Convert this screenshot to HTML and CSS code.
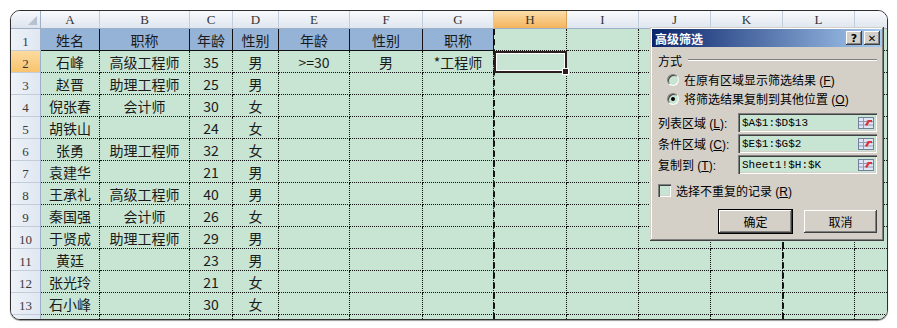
FILE: index.html
```html
<!DOCTYPE html>
<html>
<head>
<meta charset="utf-8">
<title>高级筛选</title>
<link rel="stylesheet" href="styles.css">
</head>
<body>
<div class="frame">
  <div class="sheet">
    <div class="corner"></div><div class="ch">A</div><div class="ch">B</div><div class="ch">C</div><div class="ch">D</div><div class="ch">E</div><div class="ch">F</div><div class="ch">G</div><div class="ch on">H</div><div class="ch">I</div><div class="ch">J</div><div class="ch">K</div><div class="ch">L</div><div class="ch"></div>

    <div class="rh">1</div><div class="hd">姓名</div><div class="hd">职称</div><div class="hd">年龄</div><div class="hd">性别</div><div class="hd">年龄</div><div class="hd">性别</div><div class="hd">职称</div><div></div><div></div><div></div><div></div><div></div><div></div>
    <div class="rh on">2</div><div>石峰</div><div>高级工程师</div><div>35</div><div>男</div><div>&gt;=30</div><div>男</div><div>*工程师</div><div class="sel"></div><div></div><div></div><div></div><div></div><div></div>
    <div class="rh">3</div><div>赵晋</div><div>助理工程师</div><div>25</div><div>男</div><div></div><div></div><div></div><div></div><div></div><div></div><div></div><div></div><div></div>
    <div class="rh">4</div><div>倪张春</div><div>会计师</div><div>30</div><div>女</div><div></div><div></div><div></div><div></div><div></div><div></div><div></div><div></div><div></div>
    <div class="rh">5</div><div>胡铁山</div><div></div><div>24</div><div>女</div><div></div><div></div><div></div><div></div><div></div><div></div><div></div><div></div><div></div>
    <div class="rh">6</div><div>张勇</div><div>助理工程师</div><div>32</div><div>女</div><div></div><div></div><div></div><div></div><div></div><div></div><div></div><div></div><div></div>
    <div class="rh">7</div><div>袁建华</div><div></div><div>21</div><div>男</div><div></div><div></div><div></div><div></div><div></div><div></div><div></div><div></div><div></div>
    <div class="rh">8</div><div>王承礼</div><div>高级工程师</div><div>40</div><div>男</div><div></div><div></div><div></div><div></div><div></div><div></div><div></div><div></div><div></div>
    <div class="rh">9</div><div>秦国强</div><div>会计师</div><div>26</div><div>女</div><div></div><div></div><div></div><div></div><div></div><div></div><div></div><div></div><div></div>
    <div class="rh">10</div><div>于贤成</div><div>助理工程师</div><div>29</div><div>男</div><div></div><div></div><div></div><div></div><div></div><div></div><div></div><div></div><div></div>
    <div class="rh">11</div><div>黄廷</div><div></div><div>23</div><div>男</div><div></div><div></div><div></div><div></div><div></div><div></div><div></div><div></div><div></div>
    <div class="rh">12</div><div>张光玲</div><div></div><div>21</div><div>女</div><div></div><div></div><div></div><div></div><div></div><div></div><div></div><div></div><div></div>
    <div class="rh">13</div><div>石小峰</div><div></div><div>30</div><div>女</div><div></div><div></div><div></div><div></div><div></div><div></div><div></div><div></div><div></div>
    <div class="rh"></div><div></div><div></div><div></div><div></div><div></div><div></div><div></div><div></div><div></div><div></div><div></div><div></div><div></div>
  </div>
  <!-- copy-to range H:K, marching ants -->
  <div class="ants"></div>
</div>

<div class="dlg">
  <div class="title">
    <span>高级筛选</span>
    <div class="tbtns"><b>?</b><b class="x">✕</b></div>
  </div>
  <div class="dbody">
    <div class="legend"><span>方式</span><i></i></div>
    <div class="opt"><span class="radio"></span><span>在原有区域显示筛选结果 (<u>F</u>)</span></div>
    <div class="opt"><span class="radio on"></span><span>将筛选结果复制到其他位置 (<u>O</u>)</span></div>

    <div class="field first"><span class="lbl">列表区域 (<u>L</u>):</span><div class="inp"><span>$A$1:$D$13</span><svg class="pick" width="16" height="12" viewBox="0 0 16 12"><rect x="0.5" y="0.5" width="15" height="11" fill="#dfe6f2" stroke="#6f7f9c"/><path d="M1 4.5h14M1 8h14M5.5 1v10" stroke="#8b9bb8" fill="none"/><path d="M8 3h6v2.5l-2.2-1-2.8 4.5-2-1.3 2.8-4.3z" fill="#e0303a"/></svg></div></div>
    <div class="field"><span class="lbl">条件区域 (<u>C</u>):</span><div class="inp"><span>$E$1:$G$2</span><svg class="pick" width="16" height="12" viewBox="0 0 16 12"><rect x="0.5" y="0.5" width="15" height="11" fill="#dfe6f2" stroke="#6f7f9c"/><path d="M1 4.5h14M1 8h14M5.5 1v10" stroke="#8b9bb8" fill="none"/><path d="M8 3h6v2.5l-2.2-1-2.8 4.5-2-1.3 2.8-4.3z" fill="#e0303a"/></svg></div></div>
    <div class="field"><span class="lbl">复制到 (<u>T</u>):</span><div class="inp"><span>Sheet1!$H:$K</span><svg class="pick" width="16" height="12" viewBox="0 0 16 12"><rect x="0.5" y="0.5" width="15" height="11" fill="#dfe6f2" stroke="#6f7f9c"/><path d="M1 4.5h14M1 8h14M5.5 1v10" stroke="#8b9bb8" fill="none"/><path d="M8 3h6v2.5l-2.2-1-2.8 4.5-2-1.3 2.8-4.3z" fill="#e0303a"/></svg></div></div>

    <div class="chk"><span class="box"></span><span>选择不重复的记录 (<u>R</u>)</span></div>

    <div class="btns">
      <button class="def">确定</button>
      <button>取消</button>
    </div>
  </div>
</div>
</body>
</html>
```

FILE: styles.css
```css
body {
  margin: 0;
  padding: 10px;
  position: relative;
  background: #fff;
  font-family: "Noto Sans CJK SC", sans-serif;
}

/* worksheet frame with rounded corners */
.frame {
  position: relative;
  width: 878px;
  height: 310px;
  box-sizing: border-box;
  border: 1px solid #2e2e2e;
  border-radius: 10px;
  overflow: hidden;
  box-shadow: 0 1px 1px #999;
}

.sheet {
  display: grid;
  grid-template-columns: 30px 59px 90px 43px 46px 71px 73px 71px 73px 72px 72px 72px 72px 72px;
  grid-template-rows: 18px repeat(14, 22px);
}

.sheet > div {
  box-sizing: border-box;
  display: flex;
  align-items: center;
  justify-content: center;
  background: #c8e4d2;
  border-right: 1px dotted #111;
  border-bottom: 1px dotted #111;
  font-size: 14px;
  line-height: 1;
  color: #1a1a1a;
  white-space: nowrap;
  overflow: hidden;
}

.sheet > .corner {
  position: relative;
  background: linear-gradient(#f7f9fc, #dde4ee);
  border-right: 1px solid #9eb0c8;
  border-bottom: 1px solid #9eb0c8;
}

.corner::after {
  content: "";
  position: absolute;
  right: 3px;
  bottom: 3px;
  border-left: 9px solid transparent;
  border-bottom: 9px solid #b7c2d1;
}

.sheet > .ch {
  background: linear-gradient(#f8fafc, #dfe6ef);
  border-right: 1px solid #c3ccd9;
  border-bottom: 1px solid #9eb0c8;
  font-family: "Liberation Serif", serif;
  font-size: 13px;
  color: #333;
}

.sheet > .ch.on {
  background: linear-gradient(#fbdda9, #f4b45c);
  border-right-color: #d9a45a;
}

.sheet > .rh {
  background: linear-gradient(to right, #eef2f8, #dfe7f2);
  border-right: 1px solid #9eb0c8;
  border-bottom: 1px solid #c3ccd9;
  font-family: "Liberation Serif", serif;
  font-size: 13px;
  color: #3a3a3a;
  padding-top: 3px;
}

.sheet > .rh.on {
  background: linear-gradient(#fcdba0, #f8c36e);
}

.sheet > .hd {
  background: #95b3d7;
  border-right: 1px solid #111;
  border-bottom: 1px solid #111;
}

.sheet > .sel {
  position: relative;
  overflow: visible;
  border: 2px solid #2b1e1e;
  box-shadow: inset 0 0 0 1px #fff;
  z-index: 2;
}

.sel::after {
  content: "";
  position: absolute;
  right: -4px;
  bottom: -4px;
  width: 5px;
  height: 5px;
  background: #2b1e1e;
  border: 1px solid #fff;
}

.ants {
  position: absolute;
  top: 18px;
  bottom: 0;
  left: 482px;
  width: 291px;
  box-sizing: border-box;
  border-left: 2px dashed #111;
  border-right: 2px dashed #111;
  z-index: 1;
}

/* advanced filter dialog */
.dlg {
  position: absolute;
  left: 650px;
  top: 27px;
  z-index: 5;
  width: 234px;
  box-sizing: border-box;
  padding: 2px;
  background: #d4d0c8;
  box-shadow: inset -1px -1px #404040, inset 1px 1px #d4d0c8, inset -2px -2px #808080, inset 2px 2px #fff;
  font-family: "Liberation Sans", "Noto Sans CJK SC", sans-serif;
  font-size: 12px;
  color: #000;
}

.title {
  height: 18px;
  display: flex;
  align-items: center;
  justify-content: space-between;
  padding: 0 2px 0 3px;
  background: linear-gradient(to right, #0a246a, #a6caf0);
  color: #fff;
  font-weight: bold;
  font-size: 12px;
}

.tbtns {
  display: flex;
  gap: 2px;
}

.tbtns b {
  width: 16px;
  height: 14px;
  box-sizing: border-box;
  display: flex;
  align-items: center;
  justify-content: center;
  background: #d4d0c8;
  color: #000;
  font-family: "DejaVu Sans", sans-serif;
  font-size: 11px;
  box-shadow: inset -1px -1px #404040, inset 1px 1px #fff, inset -2px -2px #808080;
}

.tbtns .x {
  font-size: 10px;
}

.dbody {
  padding: 6px 5px 6px 6px;
}

.legend {
  height: 14px;
  display: flex;
  align-items: center;
  gap: 6px;
}

.legend i {
  flex: 1;
  height: 0;
  border-top: 1px solid #808080;
  border-bottom: 1px solid #fff;
}

.opt {
  height: 19px;
  display: flex;
  align-items: center;
  gap: 5px;
  margin-left: 9px;
}

.legend + .opt {
  margin-top: 3px;
}

.radio {
  width: 12px;
  height: 12px;
  box-sizing: border-box;
  border-radius: 50%;
  background: #c8e4d2;
  border: 1px solid;
  border-color: #808080 #fff #fff #808080;
  box-shadow: inset 1px 1px #404040;
  position: relative;
}

.radio.on::after {
  content: "";
  position: absolute;
  left: 3px;
  top: 3px;
  width: 4px;
  height: 4px;
  border-radius: 50%;
  background: #000;
}

.field {
  display: flex;
  align-items: center;
  margin-top: 2px;
}

.field.first {
  margin-top: 5px;
}

.lbl {
  width: 80px;
}

.inp {
  flex: 1;
  height: 19px;
  box-sizing: border-box;
  display: flex;
  align-items: center;
  justify-content: space-between;
  padding: 0 3px 0 4px;
  background: #c8e4d2;
  box-shadow: inset 1px 1px #808080, inset 2px 2px #404040, inset -1px -1px #fff, inset -2px -2px #d4d0c8;
  font-family: "Liberation Mono", monospace;
  font-size: 11px;
}

.pick {
  display: block;
}

.chk {
  height: 18px;
  margin-top: 7px;
  display: flex;
  align-items: center;
  gap: 5px;
}

.box {
  width: 13px;
  height: 13px;
  box-sizing: border-box;
  background: #c8e4d2;
  box-shadow: inset 1px 1px #808080, inset 2px 2px #404040, inset -1px -1px #fff, inset -2px -2px #d4d0c8;
}

.btns {
  display: flex;
  justify-content: flex-end;
  gap: 12px;
  margin-top: 11px;
}

.btns button {
  width: 73px;
  height: 23px;
  padding: 0;
  border: 0;
  background: #d4d0c8;
  font-family: "Noto Sans CJK SC", sans-serif;
  font-size: 12px;
  color: #000;
  box-shadow: inset -1px -1px #404040, inset 1px 1px #fff, inset -2px -2px #808080, inset 2px 2px #d4d0c8;
}

.btns button.def {
  box-shadow: 0 0 0 1px #000, inset -1px -1px #404040, inset 1px 1px #fff, inset -2px -2px #808080, inset 2px 2px #d4d0c8;
}
```
